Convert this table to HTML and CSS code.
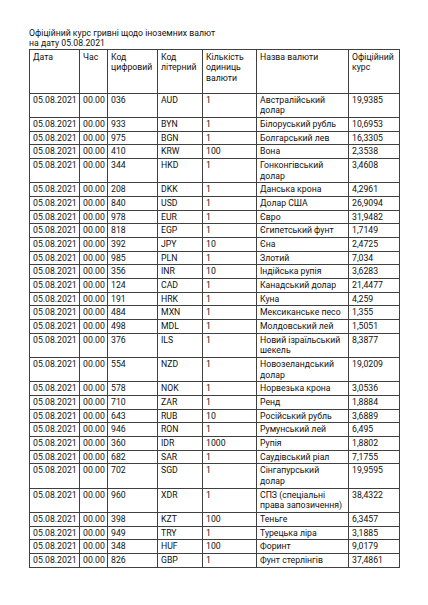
FILE: index.html
```html
<!DOCTYPE html>
<html lang="uk">
<head>
<meta charset="utf-8">
<link rel="stylesheet" href="styles.css">
</head>
<body>
<div class="page">
  <div class="title">
    <div>Офіційний курс гривні щодо іноземних валют</div>
    <div>на дату 05.08.2021</div>
  </div>
  <div class="rates" role="table">
    <div class="cell h">Дата</div><div class="cell h">Час</div><div class="cell h">Код цифровий</div><div class="cell h">Код літерний</div><div class="cell h">Кількість одиниць валюти</div><div class="cell h">Назва валюти</div><div class="cell h">Офіційний курс</div>
    <div class="cell">05.08.2021</div><div class="cell">00.00</div><div class="cell">036</div><div class="cell">AUD</div><div class="cell">1</div><div class="cell">Австралійський долар</div><div class="cell">19,9385</div>
    <div class="cell">05.08.2021</div><div class="cell">00.00</div><div class="cell">933</div><div class="cell">BYN</div><div class="cell">1</div><div class="cell">Білоруський рубль</div><div class="cell">10,6953</div>
    <div class="cell">05.08.2021</div><div class="cell">00.00</div><div class="cell">975</div><div class="cell">BGN</div><div class="cell">1</div><div class="cell">Болгарський лев</div><div class="cell">16,3305</div>
    <div class="cell">05.08.2021</div><div class="cell">00.00</div><div class="cell">410</div><div class="cell">KRW</div><div class="cell">100</div><div class="cell">Вона</div><div class="cell">2,3538</div>
    <div class="cell">05.08.2021</div><div class="cell">00.00</div><div class="cell">344</div><div class="cell">HKD</div><div class="cell">1</div><div class="cell">Гонконгівський долар</div><div class="cell">3,4608</div>
    <div class="cell">05.08.2021</div><div class="cell">00.00</div><div class="cell">208</div><div class="cell">DKK</div><div class="cell">1</div><div class="cell">Данська крона</div><div class="cell">4,2961</div>
    <div class="cell">05.08.2021</div><div class="cell">00.00</div><div class="cell">840</div><div class="cell">USD</div><div class="cell">1</div><div class="cell">Долар США</div><div class="cell">26,9094</div>
    <div class="cell">05.08.2021</div><div class="cell">00.00</div><div class="cell">978</div><div class="cell">EUR</div><div class="cell">1</div><div class="cell">Євро</div><div class="cell">31,9482</div>
    <div class="cell">05.08.2021</div><div class="cell">00.00</div><div class="cell">818</div><div class="cell">EGP</div><div class="cell">1</div><div class="cell">Єгипетський фунт</div><div class="cell">1,7149</div>
    <div class="cell">05.08.2021</div><div class="cell">00.00</div><div class="cell">392</div><div class="cell">JPY</div><div class="cell">10</div><div class="cell">Єна</div><div class="cell">2,4725</div>
    <div class="cell">05.08.2021</div><div class="cell">00.00</div><div class="cell">985</div><div class="cell">PLN</div><div class="cell">1</div><div class="cell">Злотий</div><div class="cell">7,034</div>
    <div class="cell">05.08.2021</div><div class="cell">00.00</div><div class="cell">356</div><div class="cell">INR</div><div class="cell">10</div><div class="cell">Індійська рупія</div><div class="cell">3,6283</div>
    <div class="cell">05.08.2021</div><div class="cell">00.00</div><div class="cell">124</div><div class="cell">CAD</div><div class="cell">1</div><div class="cell">Канадський долар</div><div class="cell">21,4477</div>
    <div class="cell">05.08.2021</div><div class="cell">00.00</div><div class="cell">191</div><div class="cell">HRK</div><div class="cell">1</div><div class="cell">Куна</div><div class="cell">4,259</div>
    <div class="cell">05.08.2021</div><div class="cell">00.00</div><div class="cell">484</div><div class="cell">MXN</div><div class="cell">1</div><div class="cell">Мексиканське песо</div><div class="cell">1,355</div>
    <div class="cell">05.08.2021</div><div class="cell">00.00</div><div class="cell">498</div><div class="cell">MDL</div><div class="cell">1</div><div class="cell">Молдовський лей</div><div class="cell">1,5051</div>
    <div class="cell">05.08.2021</div><div class="cell">00.00</div><div class="cell">376</div><div class="cell">ILS</div><div class="cell">1</div><div class="cell">Новий ізраїльський шекель</div><div class="cell">8,3877</div>
    <div class="cell">05.08.2021</div><div class="cell">00.00</div><div class="cell">554</div><div class="cell">NZD</div><div class="cell">1</div><div class="cell">Новозеландський долар</div><div class="cell">19,0209</div>
    <div class="cell">05.08.2021</div><div class="cell">00.00</div><div class="cell">578</div><div class="cell">NOK</div><div class="cell">1</div><div class="cell">Норвезька крона</div><div class="cell">3,0536</div>
    <div class="cell">05.08.2021</div><div class="cell">00.00</div><div class="cell">710</div><div class="cell">ZAR</div><div class="cell">1</div><div class="cell">Ренд</div><div class="cell">1,8884</div>
    <div class="cell">05.08.2021</div><div class="cell">00.00</div><div class="cell">643</div><div class="cell">RUB</div><div class="cell">10</div><div class="cell">Російський рубль</div><div class="cell">3,6889</div>
    <div class="cell">05.08.2021</div><div class="cell">00.00</div><div class="cell">946</div><div class="cell">RON</div><div class="cell">1</div><div class="cell">Румунський лей</div><div class="cell">6,495</div>
    <div class="cell">05.08.2021</div><div class="cell">00.00</div><div class="cell">360</div><div class="cell">IDR</div><div class="cell">1000</div><div class="cell">Рупія</div><div class="cell">1,8802</div>
    <div class="cell">05.08.2021</div><div class="cell">00.00</div><div class="cell">682</div><div class="cell">SAR</div><div class="cell">1</div><div class="cell">Саудівський ріал</div><div class="cell">7,1755</div>
    <div class="cell">05.08.2021</div><div class="cell">00.00</div><div class="cell">702</div><div class="cell">SGD</div><div class="cell">1</div><div class="cell">Сінгапурський долар</div><div class="cell">19,9595</div>
    <div class="cell">05.08.2021</div><div class="cell">00.00</div><div class="cell">960</div><div class="cell">XDR</div><div class="cell">1</div><div class="cell">СПЗ (спеціальні права запозичення)</div><div class="cell">38,4322</div>
    <div class="cell">05.08.2021</div><div class="cell">00.00</div><div class="cell">398</div><div class="cell">KZT</div><div class="cell">100</div><div class="cell">Теньге</div><div class="cell">6,3457</div>
    <div class="cell">05.08.2021</div><div class="cell">00.00</div><div class="cell">949</div><div class="cell">TRY</div><div class="cell">1</div><div class="cell">Турецька ліра</div><div class="cell">3,1885</div>
    <div class="cell">05.08.2021</div><div class="cell">00.00</div><div class="cell">348</div><div class="cell">HUF</div><div class="cell">100</div><div class="cell">Форинт</div><div class="cell">9,0179</div>
    <div class="cell">05.08.2021</div><div class="cell">00.00</div><div class="cell">826</div><div class="cell">GBP</div><div class="cell">1</div><div class="cell">Фунт стерлінгів</div><div class="cell">37,4861</div>
  </div>
</div>
</body>
</html>
```

FILE: styles.css
```css
html, body {
  margin: 0;
  padding: 0;
  background: #ffffff;
}
.page {
  padding: 29px 0 0 29px;
  font-family: Roboto, "Liberation Sans", sans-serif;
  font-size: 8.7px;
  color: #111111;
}
.title {
  line-height: 9.8px;
}
.rates {
  display: grid;
  grid-template-columns: 50px 28px 50px 45px 54px 92px 51px;
  width: max-content;
  border-top: 1px solid #404040;
  border-left: 1px solid #404040;
}
.cell {
  border-right: 1px solid #404040;
  border-bottom: 1px solid #404040;
  padding: 1px 2px 1px 3px;
  line-height: 10.67px;
  overflow: hidden;
}
.cell.h {
  height: 44px;
  box-sizing: border-box;
  padding-top: 2px;
}
```
